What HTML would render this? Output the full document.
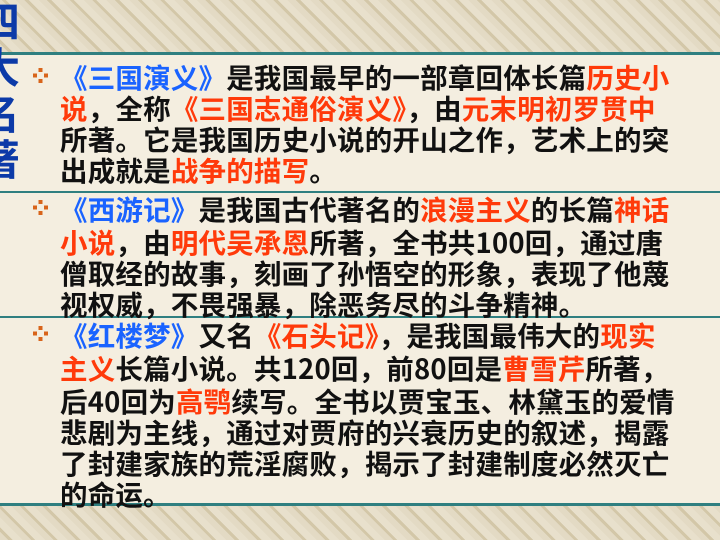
<!DOCTYPE html>
<html><head><meta charset="utf-8"><style>
body{margin:0;width:720px;height:540px;overflow:hidden;background:#f4eee0;position:relative;font-family:"Liberation Sans","Noto Sans CJK SC",sans-serif;}
.band{position:absolute;left:0;width:720px;background:repeating-linear-gradient(45deg,#e3dac4 0 6px,#d3c7a8 6px 9px,#e8e0cc 9px 16px),#ddd2b8;}
.hl{position:absolute;left:0;width:720px;height:3px;background:#2f7f80;}
.t{position:absolute;left:60px;font-size:27.5px;font-weight:bold;line-height:31px;white-space:nowrap;color:#111;letter-spacing:0.2px}
.n{font-family:"Noto Sans CJK SC",sans-serif;}
.b{color:#1a63ff}.r{color:#ff3a0a}
.bul{position:absolute;left:33px;width:15px;height:15px;}
.title{position:absolute;left:-22px;color:#0c3aa8;font-size:42px;font-weight:bold;line-height:46px;width:46px;top:-3px;font-family:"Noto Sans CJK SC",sans-serif}
</style></head><body>
<div class="band" style="top:0;height:52px"></div>
<div class="band" style="top:505px;height:35px"></div>
<div class="hl" style="top:52px"></div>
<div class="hl" style="top:191px;height:2px"></div>
<div class="hl" style="top:316px;height:2px"></div>
<div class="hl" style="top:503px"></div>
<div class="title">四<br>大<br>名<br>著</div>
<svg class="bul" style="top:68px" viewBox="0 0 15 15"><g fill="#d8641a"><rect x="5.5" y="0" width="4" height="4"/><rect x="0" y="5.5" width="4" height="4"/><rect x="11" y="5.5" width="4" height="4"/><rect x="5.5" y="11" width="4" height="4"/></g></svg>
<svg class="bul" style="top:200px" viewBox="0 0 15 15"><g fill="#d8641a"><rect x="5.5" y="0" width="4" height="4"/><rect x="0" y="5.5" width="4" height="4"/><rect x="11" y="5.5" width="4" height="4"/><rect x="5.5" y="11" width="4" height="4"/></g></svg>
<svg class="bul" style="top:326px" viewBox="0 0 15 15"><g fill="#d8641a"><rect x="5.5" y="0" width="4" height="4"/><rect x="0" y="5.5" width="4" height="4"/><rect x="11" y="5.5" width="4" height="4"/><rect x="5.5" y="11" width="4" height="4"/></g></svg>
<div class="t" style="top:63px"><span class="b">《三国演义》</span>是我国最早的一部章回体长篇<span class="r">历史小</span><br><span class="r">说</span>，全称<span class="r">《三国志通俗演义》</span>，由<span class="r">元末明初罗贯中</span><br>所著。它是我国历史小说的开山之作，艺术上的突<br>出成就是<span class="r">战争的描写</span>。</div>
<div class="t" style="top:195px"><span class="b">《西游记》</span>是我国古代著名的<span class="r">浪漫主义</span>的长篇<span class="r">神话</span><br><span class="r">小说</span>，由<span class="r">明代吴承恩</span>所著，全书共<span class="n">100</span>回，通过唐<br>僧取经的故事，刻画了孙悟空的形象，表现了他蔑<br>视权威，不畏强暴，除恶务尽的斗争精神。</div>
<div class="t" style="top:321px"><span class="b">《红楼梦》</span>又名<span class="r">《石头记》</span>，是我国最伟大的<span class="r">现实</span><br><span class="r">主义</span>长篇小说。共<span class="n">120</span>回，前<span class="n">80</span>回是<span class="r">曹雪芹</span>所著，<br>后<span class="n">40</span>回为<span class="r">高鹗</span>续写。全书以贾宝玉、林黛玉的爱情<br>悲剧为主线，通过对贾府的兴衰历史的叙述，揭露<br>了封建家族的荒淫腐败，揭示了封建制度必然灭亡<br>的命运。</div>
</body></html>
